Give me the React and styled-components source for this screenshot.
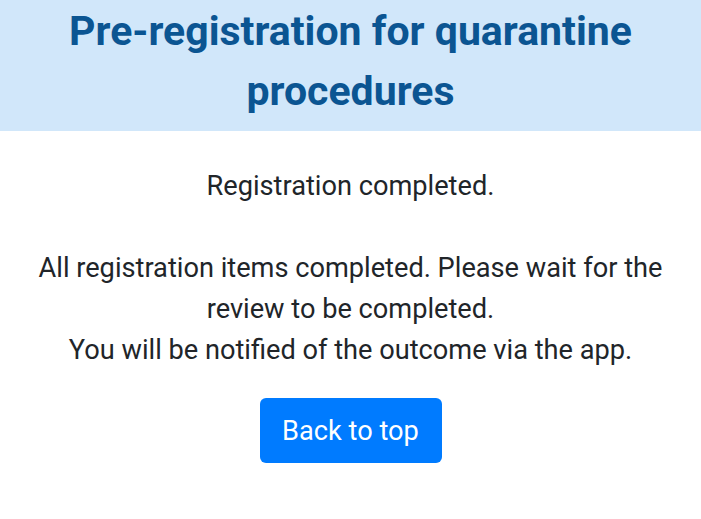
import React from "react";
import styled, { createGlobalStyle } from "styled-components";

const Global = createGlobalStyle`
  html, body { margin: 0; padding: 0; background: #ffffff; }
  body { font-family: Roboto, "Noto Sans", sans-serif; color: #212529; }
`;

const Page = styled.div`
  display: flex;
  flex-direction: column;
  align-items: center;
`;

const Header = styled.header`
  align-self: stretch;
  background: #d1e7fa;
  height: 131px;
  box-sizing: border-box;
  padding: 1px 20px 0;
  display: flex;
  justify-content: center;
`;

const Title = styled.h1`
  margin: 0;
  max-width: 640px;
  text-align: center;
  font-size: 41px;
  line-height: 60px;
  font-weight: 700;
  color: #0b5592;
`;

const Message = styled.p`
  margin: 35px 0 0;
  padding: 0 10px;
  text-align: center;
  font-size: 27.2px;
  line-height: 41px;
  font-weight: 400;
  white-space: nowrap;
`;

const Button = styled.button`
  margin-top: 27px;
  width: 182px;
  height: 65px;
  border: none;
  border-radius: 6px;
  background: #007bff;
  color: #ffffff;
  font-family: Roboto, "Noto Sans", sans-serif;
  font-size: 27.2px;
  cursor: pointer;
`;

export default function App() {
  return (
    <Page>
      <Global />
      <Header>
        <Title>Pre-registration for quarantine procedures</Title>
      </Header>
      <Message>
        Registration completed.
        <br />
        <br />
        All registration items completed. Please wait for the
        <br />
        review to be completed.
        <br />
        You will be notified of the outcome via the app.
      </Message>
      <Button>Back to top</Button>
    </Page>
  );
}
